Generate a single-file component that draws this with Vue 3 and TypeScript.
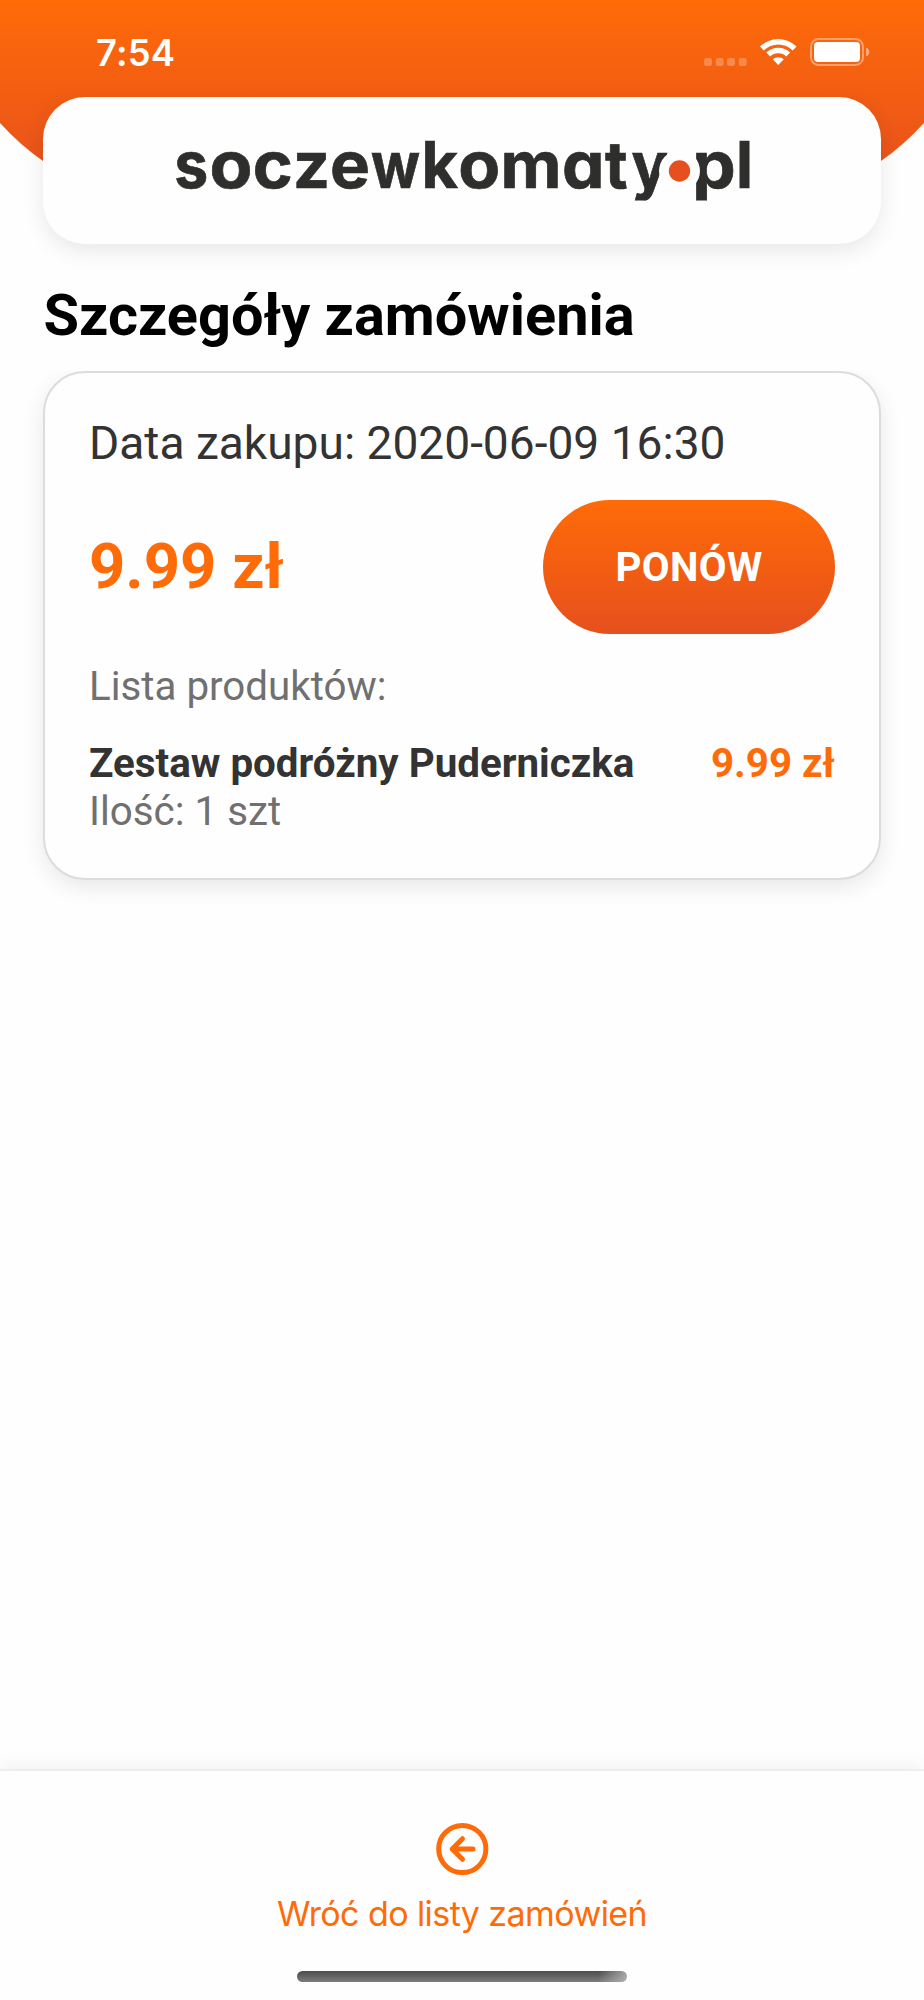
<script setup lang="ts">
interface Product {
  name: string
  quantity: number
  price: string
}

interface Order {
  date: string
  total: string
  products: Product[]
}

interface Glyph {
  char: string
  x: number
  width: number
}

const order: Order = {
  date: '2020-06-09 16:30',
  total: '9.99 zł',
  products: [{ name: 'Zestaw podróżny Puderniczka', quantity: 1, price: '9.99 zł' }],
}

// Letters of the wordmark with their hand-tuned positions and advances.
const wordmark: Glyph[] = [
  { char: 's', x: 174.2, width: 34 },
  { char: 'o', x: 209.5, width: 43 },
  { char: 'c', x: 252.7, width: 40 },
  { char: 'z', x: 293, width: 37 },
  { char: 'e', x: 330, width: 40 },
  { char: 'w', x: 371, width: 49 },
  { char: 'k', x: 421.5, width: 36.5 },
  { char: 'o', x: 458.2, width: 42 },
  { char: 'm', x: 500.5, width: 61 },
  { char: 'a', x: 562, width: 42.5 },
  { char: 't', x: 605, width: 22.5 },
  { char: 'y', x: 631.5, width: 36.5 },
  { char: 'p', x: 692.3, width: 43.5 },
  { char: 'l', x: 736, width: 17 },
]
</script>

<template>
  <div class="screen">
    <header class="top">
      <svg class="backdrop" viewBox="0 0 924 210" aria-hidden="true">
        <defs>
          <linearGradient id="top-fill" x1="0" y1="0" x2="0" y2="1">
            <stop offset="0" stop-color="#ff6b07" />
            <stop offset="1" stop-color="#e6501e" />
          </linearGradient>
        </defs>
        <path fill="url(#top-fill)" d="M0 0H924V123Q904 145 881 161Q820 185 724 185H200Q104 185 43 161Q20 145 0 123Z" />
      </svg>
      <div class="status">
        <span class="time">7:54</span>
        <svg class="indicators" width="168" height="32" viewBox="0 0 168 32">
          <g fill="#fff" fill-opacity=".25">
            <rect x="2" y="20" width="8" height="8" rx="2.5" />
            <rect x="13.7" y="20" width="8" height="8" rx="2.5" />
            <rect x="25" y="20" width="8" height="8" rx="2.5" />
            <rect x="36.7" y="20" width="8" height="8" rx="2.5" />
          </g>
          <g fill="#fff">
            <path d="M58 8.600A26 26 0 0 1 94.500 8.600L90.700 12.400A20.500 20.500 0 0 0 61.800 12.400Z" />
            <path d="M64.300 14.600A17 17 0 0 1 88.200 14.600L84.300 18.500A11.500 11.500 0 0 0 68.200 18.500Z" />
            <path d="M70.700 21.200A8.500 8.500 0 0 1 81.800 21.200L76.250 27Z" />
          </g>
          <rect x="109" y="1" width="52" height="26" rx="7.500" fill="none" stroke="#fff" stroke-opacity=".4" stroke-width="2" />
          <rect x="112" y="4" width="46" height="20" rx="4" fill="#fff" />
          <path d="M164 9.500A4.700 4.700 0 0 1 164 18.500Z" fill="#fff" fill-opacity=".45" />
        </svg>
      </div>
      <div class="brand">
        <svg width="838" height="147" viewBox="43 97 838 147">
          <defs><clipPath id="brand-clip"><rect x="43" y="97" width="838" height="103.500" /></clipPath></defs>
          <g clip-path="url(#brand-clip)">
            <text
              v-for="glyph in wordmark"
              :key="glyph.x"
              class="wordmark"
              :x="glyph.x"
              y="188"
              :textLength="glyph.width"
              lengthAdjust="spacingAndGlyphs"
            >{{ glyph.char }}</text>
          </g>
          <circle cx="679.500" cy="171" r="20.500" fill="#fefefe" />
          <circle cx="679.500" cy="171" r="10.700" fill="#e6501e" />
        </svg>
      </div>
    </header>

    <main class="content">
      <h1>Szczegóły zamówienia</h1>
      <section class="order">
        <p class="date">Data zakupu: {{ order.date }}</p>
        <div class="summary">
          <strong class="total">{{ order.total }}</strong>
          <button type="button">PONÓW</button>
        </div>
        <p class="list-label">Lista produktów:</p>
        <div v-for="product in order.products" :key="product.name" class="product">
          <div>
            <p class="name">{{ product.name }}</p>
            <p class="quantity">Ilość: {{ product.quantity }} szt</p>
          </div>
          <span class="price">{{ product.price }}</span>
        </div>
      </section>
    </main>

    <footer class="bottom">
      <svg width="54" height="54" viewBox="0 0 54 54" fill="none" stroke="#ff6b07" stroke-linecap="round" stroke-linejoin="round" stroke-width="5">
        <circle cx="27.300" cy="27" r="23.600" />
        <path d="M38 27H17.300M27.500 16.700L17.200 27L27.500 37.300" />
      </svg>
      <span class="back">Wróć do listy zamówień</span>
      <div class="home-bar"></div>
    </footer>
  </div>
</template>

<style>
body {
  margin: 0;
  background: #fefefe;
}
</style>

<style scoped>
.screen {
  width: 924px;
  height: 2000px;
  display: flex;
  flex-direction: column;
  overflow: hidden;
  background: #fefefe;
  font-family: Roboto, sans-serif;
}
p,
h1 {
  margin: 0;
  white-space: nowrap;
}
.top {
  position: relative;
  height: 244px;
  flex: none;
}
.backdrop {
  position: absolute;
  top: 0;
  left: 0;
  width: 924px;
  height: 210px;
}
.status {
  position: relative;
  height: 97px;
  box-sizing: border-box;
  padding: 38px 54px 0 96px;
  display: flex;
  justify-content: space-between;
  align-items: flex-start;
}
.time {
  font: 600 36.3px/31px Inter, sans-serif;
  letter-spacing: 0.2px;
  color: #fff;
}
.brand {
  position: relative;
  width: 838px;
  height: 147px;
  margin: 0 auto;
  border-radius: 42px;
  background: #fefefe;
  box-shadow: 0 7px 22px rgba(0, 0, 0, 0.09);
}
.brand svg {
  display: block;
}
.wordmark {
  font: 700 65px Inter, sans-serif;
  font-feature-settings: 'cv11';
  fill: #2e2e2d;
  stroke: #2e2e2d;
  stroke-width: 0.7px;
}
.content {
  flex: 1;
  padding: 37px 43px 0;
}
h1 {
  font-size: 57.7px;
  line-height: 68px;
  text-indent: 0.5px;
  font-weight: 700;
  color: #000;
}
.order {
  margin-top: 22px;
  height: 509px;
  box-sizing: border-box;
  border: 2px solid #dcdcdc;
  border-radius: 42px;
  padding: 43px 44px 0 44px;
  background: #fefefe;
  box-shadow: 0 7px 22px rgba(0, 0, 0, 0.09);
  clip-path: inset(0 -43px -60px -43px);
}
.date {
  font-size: 46.1px;
  line-height: 54px;
  color: #333;
}
.summary {
  margin-top: 30px;
  height: 134px;
  display: flex;
  align-items: center;
  justify-content: space-between;
}
.total {
  font-size: 63.4px;
  line-height: 72px;
  padding-bottom: 3px;
  color: #ff6b07;
}
button {
  width: 292px;
  height: 134px;
  border: 0;
  border-radius: 67px;
  padding: 0;
  background: linear-gradient(#ff6b07, #e6501e);
  color: #fff;
  font: 700 40.3px Roboto, sans-serif;
  letter-spacing: 0.4px;
}
.list-label {
  margin-top: 29px;
  font-size: 40.3px;
  line-height: 48px;
  color: #707070;
}
.product {
  margin-top: 29px;
  display: flex;
  justify-content: space-between;
  font-size: 40.35px;
  line-height: 47.5px;
}
.name {
  font-weight: 700;
  color: #333;
}
.quantity {
  color: #707070;
}
.price {
  font-weight: 700;
  color: #ff6b07;
}
.bottom {
  flex: none;
  height: 231px;
  box-sizing: border-box;
  border-top: 2px solid #eee;
  padding-top: 51px;
  display: flex;
  flex-direction: column;
  align-items: center;
  background: #fefefe;
  box-shadow: 0 -4px 18px rgba(0, 0, 0, 0.05);
}
.back {
  margin-top: 17px;
  font: 400 34px/42px Inter, sans-serif;
  letter-spacing: -0.58px;
  color: #ff6b07;
  white-space: nowrap;
}
.home-bar {
  width: 330px;
  height: 11px;
  margin-top: 36px;
  border-radius: 6px;
  background:
    linear-gradient(100deg, transparent 91%, rgba(190, 190, 190, 0.8) 100%),
    linear-gradient(#4c4c4c, #7c7c7c);
}
</style>
